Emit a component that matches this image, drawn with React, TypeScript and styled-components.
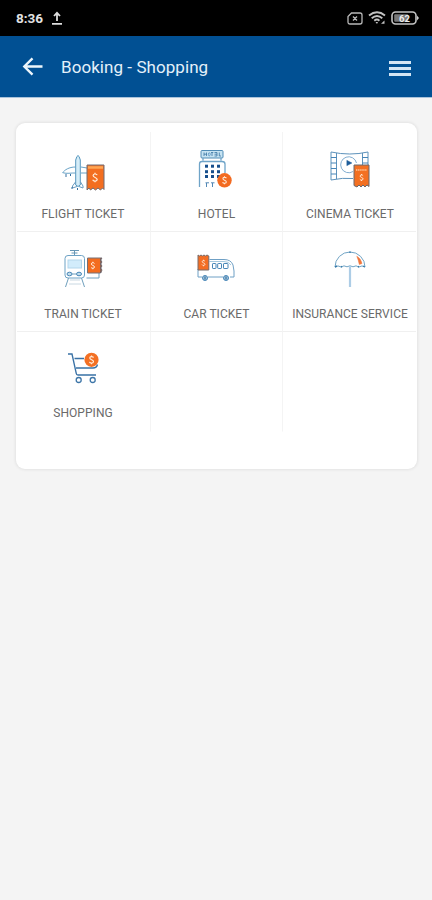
import React from 'react';
import styled, { createGlobalStyle } from 'styled-components';

const Global = createGlobalStyle`
  * { box-sizing: border-box; }
  body { margin: 0; background: #f4f4f4; font-family: Roboto, "Liberation Sans", sans-serif; }
`;
const Screen = styled.div`
  width: 432px;
  height: 900px;
  background: #f4f4f4;
  overflow: hidden;
`;
const StatusBar = styled.div`
  height: 36px;
  background: #000;
  color: #e2e2e2;
  display: flex;
  align-items: center;
  justify-content: space-between;
  padding: 0 13px 0 16px;
`;
const StatusGroup = styled.div<{ $gap: number }>`
  display: flex;
  align-items: center;
  gap: ${(p) => p.$gap}px;
`;
const Clock = styled.span`
  font-size: 13.5px;
  line-height: 16px;
  font-weight: 700;
  width: 28px;
  white-space: nowrap;
`;
const Header = styled.header`
  height: 62px;
  background: #015093;
  border-bottom: 1px solid #a9c3db;
  display: flex;
  align-items: center;
  padding: 0 21px 0 22px;
  color: #e4f0fa;
`;
const Title = styled.h1`
  flex: 1;
  margin: 0 0 0 17px;
  font-size: 17px;
  line-height: 22px;
  font-weight: 400;
  letter-spacing: 0.06px;
`;
const Burger = styled.div`
  width: 22px;
  display: flex;
  flex-direction: column;
  gap: 3px;
  margin-top: 3px;
`;
const BurgerLine = styled.span`
  height: 3px;
  background: #d3e5f4;
`;
const Card = styled.main`
  margin: 25px 15px 0 16px;
  height: 346px;
  padding: 9px 1px 0;
  background: #fff;
  border-radius: 9px;
  box-shadow: 0 0 3px 1px rgba(0, 0, 0, 0.07);
`;
const Grid = styled.div`
  display: grid;
  grid-template-columns: 134px 132px 133px;
  grid-template-rows: 100px 100px 100px;
`;
const Cell = styled.div<{ $right: boolean; $bottom: boolean; $nudge: number }>`
  display: flex;
  flex-direction: column;
  align-items: center;
  padding: 10px ${(p) => Math.max(0, -p.$nudge)}px 0 ${(p) => Math.max(0, p.$nudge)}px;
  border-right: ${(p) => (p.$right ? '1px solid #f4f4f4' : 'none')};
  border-bottom: 1px solid ${(p) => (p.$bottom ? '#f0f0f0' : 'transparent')};
`;
const Icon = styled.svg`
  width: 66px;
  height: 56px;
  flex: none;
  fill: none;
  stroke: #4685b7;
  stroke-width: 1;
`;
const Label = styled.span<{ $top: number }>`
  margin-top: ${(p) => p.$top}px;
  font-size: 12px;
  line-height: 16px;
  color: #6a6a6a;
  white-space: nowrap;
  letter-spacing: 0.05px;
`;
const Glyph = styled.svg`
  flex: none;
  display: block;
`;

const Dollar = ({ x, y, s = 1 }: { x: number; y: number; s?: number }) => (
  <g transform={`translate(${x} ${y}) scale(${s})`} stroke="#ffeedd" strokeWidth="1.3">
    <path d="M2.3-2.5C1.6-4.2-2-4.1-2-2C-2 .2 2.3-.3 2.3 2C2.3 4.2-1.7 4.2-2.4 2.4M0-5V-3.5M0 3.5V5" />
  </g>
);

const Plane = () => (
  <Icon viewBox="0 0 66 56">
    <path d="M25.5 25C19 25 14.5 28 12.7 30.7C17 32 21 30.8 25.5 31M31 25L37 26M31 31H37" stroke="#69a3c7" />
    <path d="M25.7 43V18Q28 9 30.3 18V43Q28 46 25.7 43Z" fill="#d5edf8" stroke="#5797be" />
    <path d="M25.5 40L22.5 44V46L27 44.5M30.5 40L33 44V46L29 44.5" stroke="#689abf" />
    <path d="M16 32V35M20.5 32V34M22 45V47M27.5 46V48" stroke="#356fa0" />
    <path d="M37 23H54V47.5L52.5 46L50.5 48L48 46L45.5 48L43 46L40.5 48L39 46L37 48Z" fill="#f36e20" stroke="#716b70" />
    <path d="M38 25.5H53" stroke="#ffa653" strokeWidth="2.5" />
    <Dollar x={45} y={35.5} s={0.95} />
  </Icon>
);

const Hotel = () => (
  <Icon viewBox="0 0 66 56">
    <rect x="17" y="8.5" width="22" height="7.5" rx="1" fill="#c6e3f2" stroke="#508cb6" />
    <path d="M20 10.5V14M22.5 10.5V14M20 12.2H22.5M33 10.5V14H30.5M33 10.5H30.5M33 12.2H30.5M35.3 10.5V14H37M28 10.5V14M27 10.5H29.3" stroke="#336f9e" strokeWidth=".75" />
    <ellipse cx="25.3" cy="12.3" rx="1" ry="1.5" strokeWidth=".7" />
    <path d="M19 16V18.5M37 16V18.5M15.5 45V22Q15.5 19.5 18 19.5H38Q41 19.5 41 22V31" stroke="#6fa4c8" strokeWidth="1.3" />
    <g fill="#174f8c" stroke="none">
      {[22.7, 28.2, 33].map((y) =>
        [21, 27, 33].map((x) => <rect key={`${x}-${y}`} x={x} y={y} width="3" height="3" />),
      )}
    </g>
    <path d="M22.5 45V41M28.5 45V41M21.5 40.8H25M27 40.8H30.5" stroke="#5388b5" />
    <circle cx="40.5" cy="38.3" r="7.2" fill="#f36b21" stroke="none" />
    <Dollar x={40.5} y={38.3} s={0.8} />
  </Icon>
);

const Cinema = () => (
  <Icon viewBox="0 0 66 56">
    <path d="M14 10Q33 14 51 10V23M14 38Q26 35.5 36 36.5M14 10V38M19.5 11V37M45.5 11V23" stroke="#5d92bb" />
    <path d="M14 15.5H19.5M14 21H19.5M14 26.5H19.5M14 32H19.5M45.5 15.5H51M45.5 21H51" />
    <path d="M36 29.5A8 8 0 1 1 39.5 21" stroke="#82add0" />
    <path d="M29.8 18.3L35 21L29.8 23.7Z" fill="#1d5d9b" stroke="#1d5d9b" strokeWidth=".4" />
    <path d="M37 23H52V44.5L50 43L48 45L46 43L44 45L42 43L40 45L37 43.5Z" fill="#f37022" stroke="#68686e" />
    <path d="M39 28H50" stroke="#ffc89c" strokeWidth="1.5" strokeDasharray="1.4 .7" />
    <Dollar x={44.5} y={35.5} s={0.7} />
  </Icon>
);

const Train = () => (
  <Icon viewBox="0 0 66 56">
    <path d="M20 8.5H29M24.5 8.5V13M21.5 11H27.5" stroke="#6796b5" />
    <rect x="15" y="13.5" width="19.5" height="22.5" rx="3" stroke="#6da2c5" />
    <rect x="18" y="18" width="13.5" height="8" fill="#d2ecfb" stroke="#b3d6eb" />
    <ellipse cx="19.5" cy="32" rx="2.5" ry="1.8" fill="#c0ddec" />
    <ellipse cx="29" cy="32" rx="2.5" ry="1.8" fill="#c0ddec" />
    <path d="M22 32H26.5M18.5 36L15.5 45M31.5 36L34.5 45M36.5 36H49V31" stroke="#6f9fbd" />
    <path d="M20 38H30M19 42H31" stroke="#c9d8e2" />
    <path d="M37.5 16H52L50.5 18L52 20L50.5 22L52 24L50.5 26L52 28L50.5 31H37.5Z" fill="#f36c1f" stroke="#777176" />
    <path d="M50.8 16V31" stroke="#635c65" />
    <Dollar x={42.8} y={23.5} s={0.75} />
  </Icon>
);

const Bus = () => (
  <Icon viewBox="0 0 66 56">
    <path d="M25.5 17.5H40Q47 17.5 49 23L50 29V35H46M14 27V35H18M24 35H39" stroke="#6fa0c5" />
    <path d="M25.5 19.5H40Q45 19.5 47 23" stroke="#a5c8de" />
    <rect x="28.5" y="21.5" width="3.5" height="5" rx=".6" />
    <rect x="33.7" y="21.5" width="3.8" height="5" rx=".6" />
    <rect x="39.5" y="21.5" width="4.5" height="5" rx=".6" />
    <circle cx="21" cy="36" r="2.5" fill="#a3c4dc" />
    <circle cx="42" cy="36" r="2.5" fill="#a3c4dc" />
    <path d="M21 34.5V37.5M42 34.5V37.5" stroke="#286696" />
    <path d="M14 13L15.5 14L17 13L18.5 14L20 13L21.5 14L23 13L24.8 14V28H14Z" fill="#f36e24" stroke="#786a69" />
    <Dollar x={19.5} y={21} s={0.65} />
  </Icon>
);

const Umbrella = () => (
  <Icon viewBox="0 0 66 56">
    <path d="M18 25A15 15 0 0 1 48 25Q45 22.8 42 25Q39 22.8 36 24.8Q33 22.8 30 24.8Q27 22.8 24 25Q21 22.8 18 25Z" stroke="#71a4c5" />
    <path d="M18 25L20 24M47.8 25L46 24M24 25L25 24.5M42 25L41 24.5M33 9.5V11" stroke="#387aa9" strokeWidth="1.4" />
    <path d="M39.8 14.2Q44 16.5 45 21.5L42.3 22.5Q41.5 18.2 39.8 14.2Z" fill="#f1753a" stroke="#f1753a" strokeWidth=".5" />
    <path d="M33 24V45" stroke="#adcde6" strokeWidth="2.2" />
  </Icon>
);

const Cart = () => (
  <Icon viewBox="0 0 66 56">
    <path d="M18 12H22L26.3 31.5Q26.4 33 28 33H46M24.5 16.5H34M26 26H43Q46.7 26 47.5 22.5" stroke="#3971a5" strokeWidth="1.35" />
    <circle cx="28.7" cy="38" r="2.5" stroke="#3e76a8" strokeWidth="1.3" />
    <circle cx="42.7" cy="38" r="2.5" stroke="#3e76a8" strokeWidth="1.3" />
    <circle cx="41.5" cy="17.8" r="7.1" fill="#f37024" stroke="none" />
    <Dollar x={41.5} y={17.8} s={0.88} />
  </Icon>
);

const services = [
  { label: 'FLIGHT TICKET', icon: Plane },
  { label: 'HOTEL', icon: Hotel },
  { label: 'CINEMA TICKET', icon: Cinema },
  { label: 'TRAIN TICKET', icon: Train },
  { label: 'CAR TICKET', icon: Bus },
  { label: 'INSURANCE SERVICE', icon: Umbrella },
  { label: 'SHOPPING', icon: Cart },
  null,
  null,
];

const columnNudge = [-1, 0, 1];

export default function App() {
  return (
    <>
      <Global />
      <Screen>
        <StatusBar>
          <StatusGroup $gap={8}>
            <Clock>8:36</Clock>
            <Glyph width="10" height="14" viewBox="0 0 10 14" fill="none" stroke="#ddd" strokeWidth="1.8">
              <path d="M5 10V2M2 5L5 1.8L8 5M0 12.8H10" />
            </Glyph>
          </StatusGroup>
          <StatusGroup $gap={5}>
            <Glyph width="16" height="13" viewBox="0 0 16 13" fill="none" stroke="#b9b9b9" strokeWidth="1.3">
              <path d="M4.5 1H13Q15 1 15 3V10Q15 12 13 12H3Q1 12 1 10V4.5ZM6 4.5L10 8.5M10 4.5L6 8.5" />
            </Glyph>
            <Glyph width="18" height="14" viewBox="0 0 18 14" fill="none" stroke="#c2c2c2" strokeWidth="1.9">
              <path d="M1 4.5Q9-2 17 4.5M3.7 7.2Q9 2.7 14.3 7.2M6.3 9.7Q9 7.5 11.4 9.7" />
              <path d="M7.5 11H10L9 13ZM13 12.8L16.5 9.5V12.8Z" fill="#c2c2c2" stroke="none" />
            </Glyph>
            <Glyph width="28" height="14" viewBox="0 0 28 14">
              <rect x="1" y="1" width="24" height="12" rx="3.5" fill="none" stroke="#c4c4c4" strokeWidth="1.6" />
              <rect x="3.2" y="3.3" width="14" height="7.4" rx="1" fill="#777" />
              <path d="M26 4.5L28 7L26 9.5Z" fill="#ccc" />
              <text x="13.5" y="10.5" textAnchor="middle" fill="#eee" fontFamily="Roboto, sans-serif" fontSize="9.5" fontWeight="700">62</text>
            </Glyph>
          </StatusGroup>
        </StatusBar>
        <Header>
          <Glyph width="22" height="20" viewBox="0 0 22 20" fill="none" stroke="#edf6fc" strokeWidth="2.4">
            <path d="M20.5 9.5H3M10.5 1.3L2.3 9.5L10.5 17.7" />
          </Glyph>
          <Title>Booking - Shopping</Title>
          <Burger>
            <BurgerLine />
            <BurgerLine />
            <BurgerLine />
          </Burger>
        </Header>
        <Card>
          <Grid>
            {services.map((service, i) => (
              <Cell key={i} $right={i % 3 < 2} $bottom={i < 6} $nudge={columnNudge[i % 3]}>
                {service && (
                  <>
                    <service.icon />
                    <Label $top={i < 6 ? 8 : 7}>{service.label}</Label>
                  </>
                )}
              </Cell>
            ))}
          </Grid>
        </Card>
      </Screen>
    </>
  );
}
